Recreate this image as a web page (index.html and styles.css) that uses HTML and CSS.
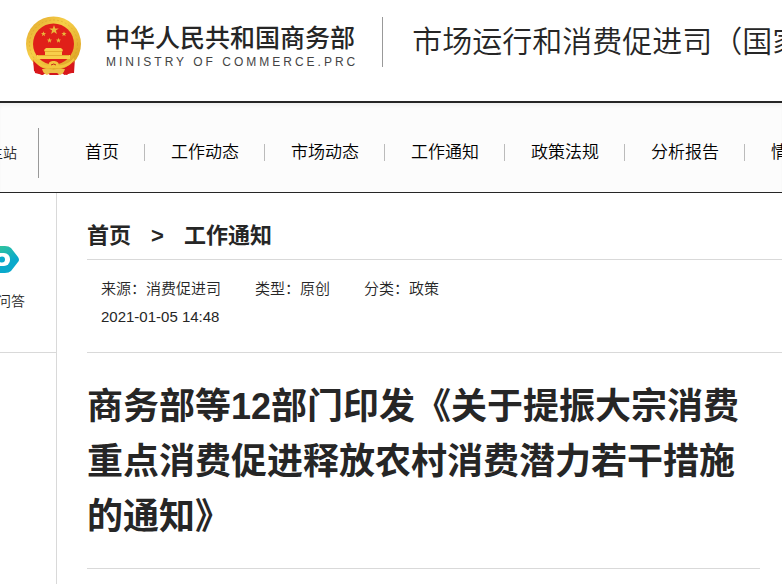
FILE: index.html
```
<!DOCTYPE html>
<html lang="zh-CN">
<head>
    <meta charset="UTF-8">
    <meta name="viewport" content="width=device-width, initial-scale=1.0">
    <title>商务部等12部门印发《关于提振大宗消费重点消费促进释放农村消费潜力若干措施的通知》</title>
    <link rel="stylesheet" href="styles.css">
</head>
<body>

    <header class="header">
        <a class="logo" href="#">
            <svg class="emblem" viewBox="0 0 56 60" width="56" height="60" aria-hidden="true">
                <defs>
                    <linearGradient id="gold" x1="0" y1="0" x2="1" y2="1">
                        <stop offset="0" stop-color="#e0a52c"/>
                        <stop offset=".4" stop-color="#f6cf48"/>
                        <stop offset="1" stop-color="#d89a1e"/>
                    </linearGradient>
                    <path id="star" d="M0-5 1.2-1.6 4.8-1.5 1.9.6 2.9 4 0 2-2.9 4-1.9.6-4.8-1.5-1.2-1.6z"/>
                </defs>
                <!-- ribbons -->
                <path d="M7 42 49 42 48 57 43 57 41 59 35 57 32 59 24 59 21 57 16 59 12 57 8 55z" fill="#d3161b"/>
                <!-- wreath and disc -->
                <circle cx="27.500" cy="28" r="27.500" fill="url(#gold)"/>
                <circle cx="27.500" cy="28" r="24" fill="none" stroke="#c98a1b" stroke-width="1" stroke-dasharray="2 2" opacity=".3"/>
                <circle cx="27.500" cy="28" r="20.500" fill="#e02019"/>
                <g fill="#e9b83c">
                    <use href="#star" transform="translate(28 14)"/>
                    <use href="#star" transform="translate(17.500 18) scale(.55)"/>
                    <use href="#star" transform="translate(38 18) scale(.55)"/>
                    <use href="#star" transform="translate(23.500 24.500) scale(.55)"/>
                    <use href="#star" transform="translate(32.500 24.500) scale(.55)"/>
                </g>
                <!-- gate -->
                <path d="M20 32h15l2 2-1 2v3h8v4H11v-4h8v-3l-1-2z" fill="#f8cf4a"/>
                <path d="M12 39.500h31M19 35.500h17" stroke="#d9971d" stroke-width=".6"/>
                <!-- gear and knot -->
                <path d="M7 43C10 48 15 52 20 53L17 59 9 57zM48 43C45 48 40 52 35 53L38 59 46 57z" fill="#d9171b"/>
                <path d="M8 42C12 47 18 50 23 49C22 46 25 45 27.500 45s6 1 5 4c4 1 11-2 15-7l1 2c-4 6-11 8-15 8H22C17 52 11 49 7 44z" fill="#f3c53d"/>
                <path d="M25 49q3-2 5 0" fill="none" stroke="#c6271b" stroke-width="1"/>
                <path d="M16 53c4 0 7-1 11.500 1C32 52 35 53 39 53c-1 3-2 5-5 6l-3-2h-7l-3 2c-3-1-4-3-5-6z" fill="#efc04a"/>
            </svg>
            <span class="logo-text">
                <span class="logo-cn">中华人民共和国商务部</span>
                <span class="logo-en">MINISTRY OF COMMERCE.PRC</span>
            </span>
        </a>
        <div class="department">市场运行和消费促进司（国家茧丝绸协调办公室）</div>
    </header>

    <nav class="nav">
        <a class="main-site" href="#">主站</a>
        <ul class="menu">
            <li><a href="#">首页</a></li>
            <li><a href="#">工作动态</a></li>
            <li><a href="#">市场动态</a></li>
            <li><a href="#">工作通知</a></li>
            <li><a href="#">政策法规</a></li>
            <li><a href="#">分析报告</a></li>
            <li><a href="#">情况介绍</a></li>
        </ul>
    </nav>

    <div class="columns">
        <aside class="side">
            <a class="side-item" href="#">
                <svg class="side-icon" viewBox="0 0 44 28" width="44" height="28" aria-hidden="true">
                    <defs>
                        <linearGradient id="teal" x1="0" y1="0" x2="1" y2="1">
                            <stop offset=".3" stop-color="#2fc29f"/>
                            <stop offset=".7" stop-color="#0aa9cb"/>
                        </linearGradient>
                    </defs>
                    <path d="M8 0h22q4 0 6 2l7 9q2 3 0 5l-7 9q-2 2-6 2H8q-3 0-5-3l-2-8q-1-3 0-5l2-8q2-3 5-3z" fill="url(#teal)"/>
                    <rect x="9" y="7" width="26" height="13" rx="6" fill="#fff"/>
                    <circle cx="27" cy="13.500" r="3" fill="#0aa9cb"/>
                </svg>
                <span>问答</span>
            </a>
        </aside>

        <main class="content">
            <div class="crumbs">
                <a href="#">首页</a>
                <span>&gt;</span>
                <a href="#">工作通知</a>
            </div>
            <div class="meta">
                <span>来源：消费促进司</span>
                <span>类型：原创</span>
                <span>分类：政策</span>
                <time datetime="2021-01-05T14:48">2021-01-05 14:48</time>
            </div>
            <article class="article">
                <h1>商务部等12部门印发《关于提振大宗消费重点消费促进释放农村消费潜力若干措施的通知》</h1>
            </article>
        </main>
    </div>

</body>
</html>
```
FILE: styles.css
```
*{
    box-sizing: border-box;
}
html, body{
    margin: 0;
    padding: 0;
    min-height: 100%;
}
html{
    height: 100%;
}
body{
    display: flex;
    flex-direction: column;
    overflow: hidden;
    background: #fff;
    color: #262626;
    font-family: "Liberation Sans", "Noto Sans CJK SC", sans-serif;
}
a{
    color: inherit;
    text-decoration: none;
}

.header{
    display: flex;
    align-items: flex-start;
    padding: 16px 0 25px 26px;
    border-bottom: 2px solid #262626;
    white-space: nowrap;
}
.logo{
    display: flex;
    flex: none;
    gap: 23px;
}
.emblem{
    display: block;
}
.logo-text{
    display: flex;
    flex-direction: column;
    padding-top: 5px;
}
.logo-cn{
    font-size: 25px;
    line-height: 34px;
    font-weight: 500;
}
.logo-en{
    color: #444;
    font-size: 12px;
    line-height: 14px;
    letter-spacing: 3px;
    padding-left: 1px;
}
.department{
    margin: 1px 0 0 24px;
    padding-left: 29px;
    border-left: 1px solid #999;
    font-size: 30px;
    line-height: 50px;
    font-weight: 350;
}

.nav{
    display: flex;
    align-items: center;
    height: 90px;
    padding-top: 10px;
    background: #fcfcfc;
    border-bottom: 1px solid #262626;
    box-shadow: inset 0 4px 4px -2px #eee;
    white-space: nowrap;
}
.main-site{
    display: flex;
    flex: none;
    justify-content: flex-end;
    width: 39px;
    padding-right: 21px;
    border-right: 1px solid #999;
    font-size: 14px;
    line-height: 50px;
    font-weight: 350;
}
.menu{
    display: flex;
    margin: 0;
    padding: 0 0 0 20px;
    list-style: none;
    color: #000;
    font-size: 17px;
    line-height: 17px;
    font-weight: 350;
}
.menu li{
    padding: 0 25px 0 26px;
    border-right: 1px solid #bbb;
}

.columns{
    display: flex;
    flex: 1;
}
.side{
    flex: none;
    width: 57px;
    border-right: 1px solid #d9d9d9;
}
.side-item{
    display: flex;
    flex-direction: column;
    align-items: flex-end;
    height: 160px;
    padding: 53px 31px 0 0;
    border-bottom: 1px solid #d9d9d9;
    font-size: 14px;
    line-height: 20px;
    font-weight: 350;
    white-space: nowrap;
}
.side-icon{
    flex: none;
    margin: 0 6px 17px 0;
}

.content{
    flex: 1;
    padding-left: 30px;
}
.crumbs{
    display: flex;
    gap: 20px;
    padding-top: 20px;
    border-bottom: 1px solid #d9d9d9;
    font-size: 22px;
    line-height: 46px;
    font-weight: bold;
}
.meta{
    display: flex;
    flex-wrap: wrap;
    column-gap: 34px;
    padding: 15px 14px 21px;
    border-bottom: 1px solid #d9d9d9;
    font-size: 15px;
    line-height: 28px;
    font-weight: 350;
}
.meta time{
    width: 100%;
}
.article{
    margin-right: 22px;
    padding: 26px 0 24px;
    border-bottom: 1px solid #d9d9d9;
}
.article h1{
    margin: 0;
    font-size: 36px;
    line-height: 55px;
    font-weight: bold;
}
```
